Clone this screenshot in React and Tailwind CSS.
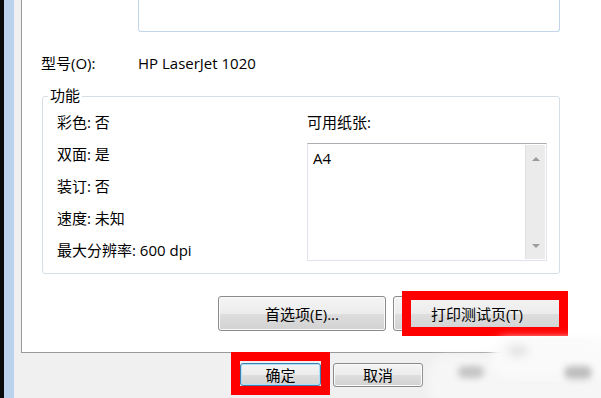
import React from "react";

// Win7-style push button
function WinButton({ children, className = "", isDefault = false }) {
  const edge = isDefault
    ? "border-[#3c7fb1] shadow-[inset_0_0_0_1px_#aee0f8]"
    : "border-[#8a8a8a] shadow-[inset_0_0_0_1px_#fbfbfb]";
  return (
    <div
      className={`flex items-center justify-center rounded-[3px] border bg-[linear-gradient(#f4f4f4_0%,#ececec_50%,#dedede_51%,#d2d2d2_100%)] ${edge} ${className}`}
    >
      {children}
    </div>
  );
}

function Row({ children }) {
  return <div className="h-[32px] flex items-center">{children}</div>;
}

function Arrow({ up }) {
  return up ? (
    <div className="w-0 h-0 border-x-[4px] border-x-transparent border-b-[4px] border-b-[#9c9c9c]" />
  ) : (
    <div className="w-0 h-0 border-x-[4px] border-x-transparent border-t-[4px] border-t-[#9c9c9c]" />
  );
}

export default function App() {
  return (
    <div className="relative w-[601px] h-[398px] overflow-hidden flex bg-[#f0f0f0] text-black text-[15px] leading-[20px] font-['Open_Sans','Noto_Sans_CJK_SC',sans-serif]">
      {/* window frame strips */}
      <div className="w-[4px] bg-[#0a0a0a]" />
      <div className="w-[10px] bg-[#bad2eb]" />

      <div className="flex-1 flex flex-col">
        {/* ── tab page ─────────────────────────────── */}
        <div className="ml-[7px] h-[353px] bg-white border-l border-b border-[#9a9a9a] flex flex-col">
          {/* location box (cut off at top) */}
          <div className="ml-[116px] w-[422px] h-[32px] border-x border-b border-[#c2d5ea] rounded-b-[3px]" />

          {/* model */}
          <div className="mt-[21px] h-[20px] flex items-center">
            <span className="w-[116px] pl-[19px]">型号(O):</span>
            <span>HP LaserJet 1020</span>
          </div>

          {/* features group */}
          <div className="relative mt-[23px] ml-[20px] w-[518px] h-[178px] border border-[#d5dfe5] rounded-[3px] flex pt-[9px]">
            <span className="absolute -top-[12px] left-[5px] px-[2px] bg-white">功能</span>

            <div className="w-[264px] pl-[14px] flex flex-col">
              <Row>彩色: 否</Row>
              <Row>双面: 是</Row>
              <Row>装订: 否</Row>
              <Row>速度: 未知</Row>
              <Row>最大分辨率: 600 dpi</Row>
            </div>

            <div className="flex flex-col">
              <Row>可用纸张:</Row>
              <div className="mt-[5px] w-[240px] h-[118px] flex border border-[#dfe3ea] border-t-[#abadb3]">
                <div className="flex-1 pl-[5px] pt-[4px]">A4</div>
                <div className="w-[20px] mr-[1px] my-[1px] bg-[#ebebeb] border-l border-[#e0e0e0] flex flex-col items-center justify-between pt-[12px] pb-[11px]">
                  <Arrow up />
                  <Arrow />
                </div>
              </div>
            </div>
          </div>

          {/* page buttons */}
          <div className="mt-[22px] ml-[196px] flex gap-[7px]">
            <WinButton className="w-[168px] h-[35px]">首选项(E)...</WinButton>
            <WinButton className="w-[168px] h-[35px]">打印测试页(T)</WinButton>
          </div>
        </div>

        {/* ── dialog buttons ───────────────────────── */}
        <div className="flex pt-[10px] pl-[226px] gap-[12px]">
          <WinButton isDefault className="w-[81px] h-[23px]">确定</WinButton>
          <WinButton className="w-[90px] h-[24px]">取消</WinButton>
        </div>
      </div>

      {/* red annotation boxes */}
      <div className="absolute left-[402px] top-[291px] w-[166px] h-[45px] border-[9px] border-[#ff0000]" />
      <div className="absolute left-[231px] top-[352px] w-[99px] h-[43px] border-[9px] border-[#ff0000]" />

      {/* blurred watermark */}
      <div className="absolute left-[428px] top-[356px] w-[190px] h-[50px] rounded-[20px] bg-[#f6f6f6] blur-[5px]" />
      <div className="absolute left-[492px] top-[338px] w-[120px] h-[40px] rounded-[16px] bg-[#fafafa] blur-[4px]" />
      <div className="absolute left-[458px] top-[366px] w-[26px] h-[12px] rounded-full bg-[#c4c4c4] blur-[3px]" />
      <div className="absolute left-[508px] top-[346px] w-[20px] h-[10px] rounded-full bg-[#e2e2e2] blur-[4px]" />
      <div className="absolute left-[564px] top-[366px] w-[28px] h-[13px] rounded-full bg-[#bdbdbd] blur-[3px]" />
    </div>
  );
}
